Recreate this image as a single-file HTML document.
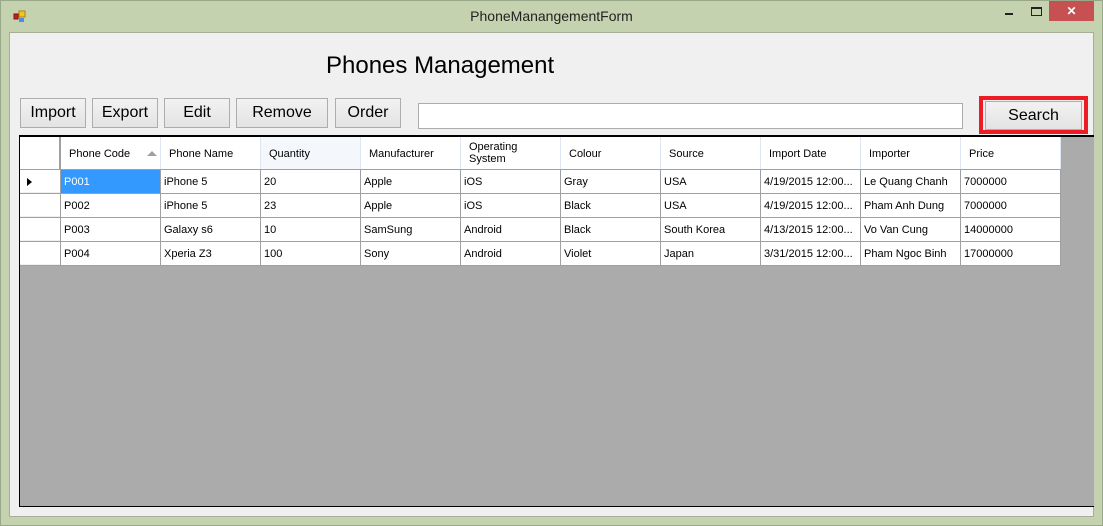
<!DOCTYPE html>
<html><head><meta charset="utf-8"><style>
*{margin:0;padding:0;box-sizing:border-box}
body{width:1103px;height:526px;background:#c5d2b0;position:relative;overflow:hidden;font-family:"Liberation Sans",sans-serif;}
.a{position:absolute}
.outer{left:0;top:0;width:1103px;height:526px;border:1px solid #9aa88a}
.client{left:9px;top:32px;width:1085px;height:485px;background:#f0f0f0;border:1px solid #a5ae98}
.btn{position:absolute;height:30px;background:linear-gradient(#f2f2f2,#e3e3e3);border:1px solid #adadad;font-size:16px;text-align:center;line-height:28px;color:#000}
.grid{left:19px;top:135px;width:1075px;height:372px;background:#ababab;border:1px solid #000;border-right:none;border-top:2px solid #000}
.cell{position:absolute;font-size:11px;color:#000;white-space:nowrap;overflow:hidden;padding-left:3px}
.hd{position:absolute;background:#fff;border-right:1px solid #dde6f3;font-size:11px;padding-left:8px}
</style></head><body>
<div class="a outer"></div>
<svg class="a" style="left:12px;top:9px" width="16" height="16"><rect x="2" y="5" width="4" height="5" fill="#cc2020" stroke="#801010" stroke-width="1"/><rect x="7" y="2" width="6" height="6" fill="#f3c420" stroke="#b08010"/><rect x="7" y="9" width="5" height="4" fill="#4a8ee8"/></svg>
<div class="a" style="left:0;top:8px;width:1103px;text-align:center;font-size:14px;color:#222">PhoneManangementForm</div>
<div class="a" style="left:1005px;top:13px;width:8px;height:2px;background:#222"></div>
<div class="a" style="left:1031px;top:7px;width:11px;height:9px;border:1px solid #222;border-top-width:2px"></div>
<div class="a" style="left:1049px;top:1px;width:45px;height:20px;background:#c75050;color:#fff;text-align:center;font-size:12px;font-weight:bold;line-height:20px">✕</div>
<div class="a client"></div>
<div class="a" style="left:326px;top:52px;font-size:24px;color:#000">Phones Management</div>
<div class="btn" style="left:20px;top:98px;width:66px">Import</div>
<div class="btn" style="left:92px;top:98px;width:66px">Export</div>
<div class="btn" style="left:164px;top:98px;width:66px">Edit</div>
<div class="btn" style="left:236px;top:98px;width:92px">Remove</div>
<div class="btn" style="left:335px;top:98px;width:66px">Order</div>
<div class="a" style="left:418px;top:103px;width:545px;height:26px;background:#fff;border:1px solid #acacac"></div>
<div class="a" style="left:979px;top:96px;width:109px;height:38px;border:4px solid #ed1c24"></div>
<div class="btn" style="left:985px;top:101px;width:97px;height:29px;line-height:28px">Search</div>
<div class="a grid"></div>
<div class="a" style="left:20px;top:137px;width:1041px;height:129px;background:#a0a0a0"></div>
<div class="a" style="left:20px;top:137px;width:40px;height:32px;background:#fff;border-right:1px solid #a0a0a0"></div>
<div id="hdr"></div>
<div id="rows"></div>
<script>
var cols=["Phone Code","Phone Name","Quantity","Manufacturer","Operating<br>System","Colour","Source","Import Date","Importer","Price"];
var h="";
for(var i=0;i<10;i++){var x=61+i*100;var bg=i==2?"background:#f4f7fc;":"";
var lh=i==4?"line-height:12px;padding-top:4px;":"line-height:34px;";
h+='<div class="hd" style="left:'+x+'px;top:137px;width:100px;height:32px;'+bg+lh+'">'+cols[i]+'</div>';}
h+='<div class="a" style="left:147px;top:151px;width:0;height:0;border-left:5px solid transparent;border-right:5px solid transparent;border-bottom:5px solid #a0a0a0"></div>';
document.getElementById("hdr").innerHTML=h;
var d=[["P001","iPhone 5","20","Apple","iOS","Gray","USA","4/19/2015 12:00...","Le Quang Chanh","7000000"],
["P002","iPhone 5","23","Apple","iOS","Black","USA","4/19/2015 12:00...","Pham Anh Dung","7000000"],
["P003","Galaxy s6","10","SamSung","Android","Black","South Korea","4/13/2015 12:00...","Vo Van Cung","14000000"],
["P004","Xperia Z3","100","Sony","Android","Violet","Japan","3/31/2015 12:00...","Pham Ngoc Binh","17000000"]];
var r="";
for(var j=0;j<4;j++){var y=170+j*24;
r+='<div class="a" style="left:20px;top:'+y+'px;width:40px;height:23px;background:#fff;border-bottom:1px solid #f0f0f0"></div>';
if(j==0)r+='<div class="a" style="left:27px;top:'+(y+8)+'px;width:0;height:0;border-top:4px solid transparent;border-bottom:4px solid transparent;border-left:5px solid #000"></div>';
for(var i=0;i<10;i++){var x=61+i*100;var sel=(j==0&&i==0);
r+='<div class="cell" style="left:'+x+'px;top:'+y+'px;width:99px;height:23px;line-height:25px;background:'+(sel?'#3399ff;color:#fff':'#fff')+'">'+d[j][i]+'</div>';}}
document.getElementById("rows").innerHTML=r;
</script>
</body></html>
